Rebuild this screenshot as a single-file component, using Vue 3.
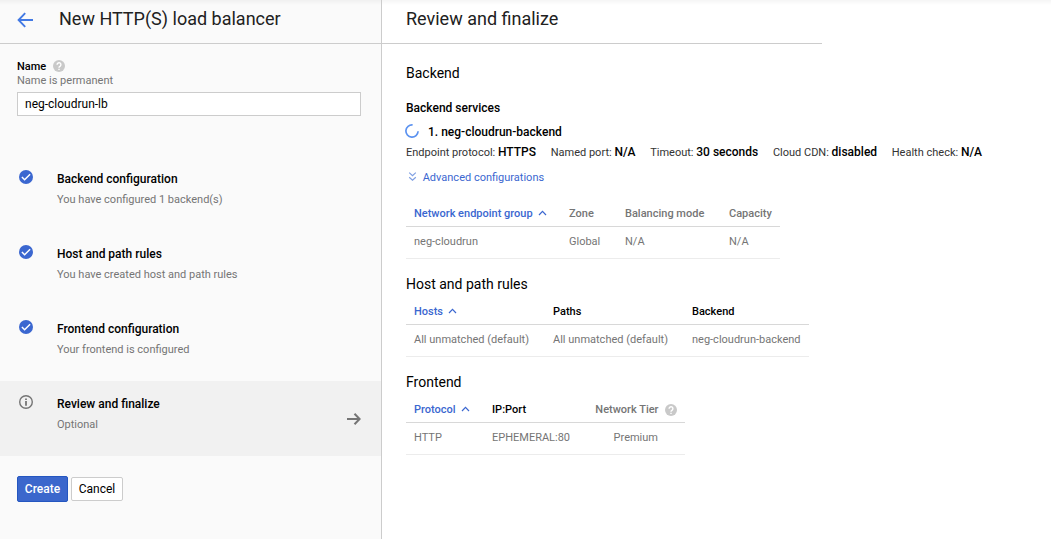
<script setup>
const steps = [
  { title: 'Backend configuration', note: 'You have configured 1 backend(s)', done: true },
  { title: 'Host and path rules', note: 'You have created host and path rules', done: true },
  { title: 'Frontend configuration', note: 'Your frontend is configured', done: true },
  { title: 'Review and finalize', note: 'Optional', done: false },
]
const details = [
  ['Endpoint protocol:', 'HTTPS'],
  ['Named port:', 'N/A'],
  ['Timeout:', '30 seconds'],
  ['Cloud CDN:', 'disabled'],
  ['Health check:', 'N/A'],
]
</script>

<template>
  <div class="page">
    <aside class="side">
      <header class="bar">
        <svg class="back" width="17" height="16" viewBox="0 0 17 16"><path d="M16 8H2M8.200 1.200L1.600 8L8.200 14.800" fill="none" stroke="#4279e4" stroke-width="1.900" /></svg>
        <h1>New HTTP(S) load balancer</h1>
      </header>
      <div class="field">
        <div class="label">
          <b>Name</b>
          <svg width="12" height="12" viewBox="0 0 12 12"><circle cx="6" cy="6" r="6" fill="#c9c9c9" /><path d="M4.100 4.700A1.900 1.900 0 1 1 7.200 6.100Q6 6.900 6 7.800M6 8.700V10.100" fill="none" stroke="#fff" stroke-width="1.400" /></svg>
        </div>
        <div class="hint">Name is permanent</div>
        <div class="input">neg-cloudrun-lb</div>
      </div>
      <ul class="steps">
        <li v-for="s in steps" :key="s.title" :class="{ active: !s.done }">
          <svg v-if="s.done" width="14" height="14" viewBox="0 0 14 14"><circle cx="7" cy="7" r="7" fill="#3b67d0" /><path d="M2.900 7L5.600 9.700L11.100 4.200" fill="none" stroke="#fff" stroke-width="1.500" /></svg>
          <svg v-else width="14" height="14" viewBox="0 0 14 14"><circle cx="7" cy="7" r="6.300" fill="none" stroke="#757575" stroke-width="1.400" /><path d="M7 3.400v1.500M7 6.100v4.600" stroke="#757575" stroke-width="1.800" /></svg>
          <div class="txt">
            <div class="t">{{ s.title }}</div>
            <div class="n">{{ s.note }}</div>
          </div>
          <svg v-if="!s.done" class="go" width="14" height="12" viewBox="0 0 14 12"><path d="M0 6H12.500M7.500 .7L12.600 6L7.500 11.300" fill="none" stroke="#757575" stroke-width="2" /></svg>
        </li>
      </ul>
      <div class="actions"><button class="create">Create</button><button class="cancel">Cancel</button></div>
    </aside>
    <main class="main">
      <header class="bar rbar"><h1>Review and finalize</h1></header>
      <div class="body">
        <h2>Backend</h2>
        <h3>Backend services</h3>
        <div class="item">
          <svg class="spinner" width="14" height="14" viewBox="0 0 14 14"><path d="M7.600 .9A6.100 6.100 0 1 0 13.100 7.300" fill="none" stroke="#5b92f0" stroke-width="1.700" /></svg>
          <span>1. neg-cloudrun-backend</span>
        </div>
        <div class="details"><span v-for="d in details" :key="d[0]">{{ d[0] }} <b>{{ d[1] }}</b></span></div>
        <div class="adv">
          <svg width="9" height="10" viewBox="0 0 9 10"><path d="M1.200 .6L4.500 3.600L7.800 .6M1.200 5.200L4.500 8.200L7.800 5.200" fill="none" stroke="#7f9fe2" stroke-width="1.200" /></svg>
          <span>Advanced configurations</span>
        </div>
        <table class="neg">
          <colgroup><col class="w155"><col class="w56"><col class="w104"><col class="w59"></colgroup>
          <thead><tr><th class="sort">Network endpoint group<svg width="9" height="6" viewBox="0 0 9 6"><path d="M1 5L4.500 1.300L8 5" fill="none" stroke="#3b67d0" stroke-width="1.200" /></svg></th><th>Zone</th><th>Balancing mode</th><th>Capacity</th></tr></thead>
          <tbody><tr><td>neg-cloudrun</td><td>Global</td><td>N/A</td><td>N/A</td></tr></tbody>
        </table>
        <h2>Host and path rules</h2>
        <table class="rules dark">
          <colgroup><col class="w139"><col class="w139"><col class="w125"></colgroup>
          <thead><tr><th class="sort">Hosts<svg width="9" height="6" viewBox="0 0 9 6"><path d="M1 5L4.500 1.300L8 5" fill="none" stroke="#3b67d0" stroke-width="1.200" /></svg></th><th>Paths</th><th>Backend</th></tr></thead>
          <tbody><tr><td>All unmatched (default)</td><td>All unmatched (default)</td><td>neg-cloudrun-backend</td></tr></tbody>
        </table>
        <h2>Frontend</h2>
        <table class="front dark">
          <colgroup><col class="w78"><col class="w93"><col class="w108"></colgroup>
          <thead><tr><th class="sort">Protocol<svg width="9" height="6" viewBox="0 0 9 6"><path d="M1 5L4.500 1.300L8 5" fill="none" stroke="#3b67d0" stroke-width="1.200" /></svg></th><th>IP:Port</th><th class="tier"><div><span>Network Tier</span><svg width="12" height="12" viewBox="0 0 12 12"><circle cx="6" cy="6" r="6" fill="#c9c9c9" /><path d="M4.100 4.700A1.900 1.900 0 1 1 7.200 6.100Q6 6.900 6 7.800M6 8.700V10.100" fill="none" stroke="#fff" stroke-width="1.400" /></svg></div></th></tr></thead>
          <tbody><tr><td>HTTP</td><td>EPHEMERAL:80</td><td class="prem">Premium</td></tr></tbody>
        </table>
      </div>
    </main>
  </div>
</template>

<style>
body { margin: 0; background: #fff; }
</style>
<style scoped>
* { box-sizing: border-box; }
.page { display: flex; width: 1051px; height: 539px; overflow: hidden; font-family: Roboto, "Liberation Sans", sans-serif; font-size: 11px; color: #000; background: linear-gradient(#f5f5f5, #fff 5px); }
.side { width: 382px; border-right: 1px solid #ccc; background: linear-gradient(#f0f0f0, #fafafa 5px); }
.bar { height: 44px; border-bottom: 1px solid #ccc; display: flex; align-items: flex-start; padding: 8px 0 0 17px; }
.back { margin-top: 4px; margin-right: 25px; }
h1 { margin: 0; font-size: 18px; line-height: 22px; font-weight: 400; color: #212121; }
.field { padding: 15px 20px 0 17px; }
.label { display: flex; align-items: center; gap: 7px; height: 14px; }
b, h3, th { font-weight: 500; }
.hint { line-height: 16px; height: 14px; color: #757575; }
.input { margin-top: 5px; height: 24px; border: 1px solid #ccc; background: #fff; padding-left: 7px; line-height: 22px; font-size: 12px; }
.steps { list-style: none; margin: 40px 0 0; padding: 0; }
li { display: flex; height: 75px; padding: 14px 20px 0 19px; }
li.active { background: #f1f1f1; }
.txt { margin-left: 24px; flex: 1; }
.t { font-size: 12px; font-weight: 500; line-height: 18px; }
.n { color: #757575; line-height: 14px; margin-top: 5px; }
.go { margin-top: 18px; }
.actions { display: flex; align-items: center; gap: 3px; padding: 20px 0 0 17px; }
button { font-family: inherit; font-size: 12px; padding: 0; border-radius: 2px; color: #000; }
.create { width: 51px; height: 26px; background: #3b67cc; border: 1px solid #2456c0; color: #fff; font-weight: 500; }
.cancel { width: 52px; height: 24px; background: #fff; border: 1px solid #ccc; }
.main { flex: 1; }
.rbar { width: 440px; padding-left: 24px; }
.body { padding: 20px 0 0 24px; }
h2 { margin: 0; font-size: 14px; font-weight: 400; line-height: 18px; }
h3 { margin: 18px 0 0; font-size: 12px; line-height: 16px; }
.item { display: flex; align-items: center; gap: 9px; margin: 8px 0 0 -1px; height: 16px; font-size: 12px; font-weight: 500; }
.spinner { margin-bottom: 2px; }
.details { display: flex; gap: 14.700px; height: 16px; margin-top: 4px; line-height: 16px; color: #333; white-space: nowrap; }
.details b { font-size: 12px; color: #000; }
.adv { display: flex; align-items: center; gap: 5.700px; margin: 9px 0 0 2px; height: 16px; color: #3b67d0; }
.adv svg { margin-bottom: 1px; }
table { border-collapse: separate; border-spacing: 0; table-layout: fixed; margin: 5px 0 16px; }
.neg { margin-top: 15px; width: 374px; }
.rules { width: 403px; }
.front { width: 279px; }
.w155 { width: 155px; } .w56 { width: 56px; } .w104 { width: 104px; } .w59 { width: 59px; }
.w139 { width: 139px; } .w125 { width: 125px; }
.w78 { width: 78px; } .w93 { width: 93px; } .w108 { width: 108px; }
th, td { text-align: left; padding: 0 8px; line-height: 14px; color: #757575; white-space: nowrap; }
th { height: 27px; padding-top: 2px; border-bottom: 1px solid #d8d8d8; }
td { height: 32px; padding-bottom: 2px; border-bottom: 1px solid #ececec; }
.dark th { color: #000; }
th.sort, .dark th.sort { color: #3b67d0; }
th.sort svg { margin-left: 5px; vertical-align: 1px; }
.dark th.tier { color: #757575; }
.tier div { display: flex; align-items: center; justify-content: flex-end; gap: 6.500px; }
td.prem { text-align: right; padding-right: 27px; }
</style>
